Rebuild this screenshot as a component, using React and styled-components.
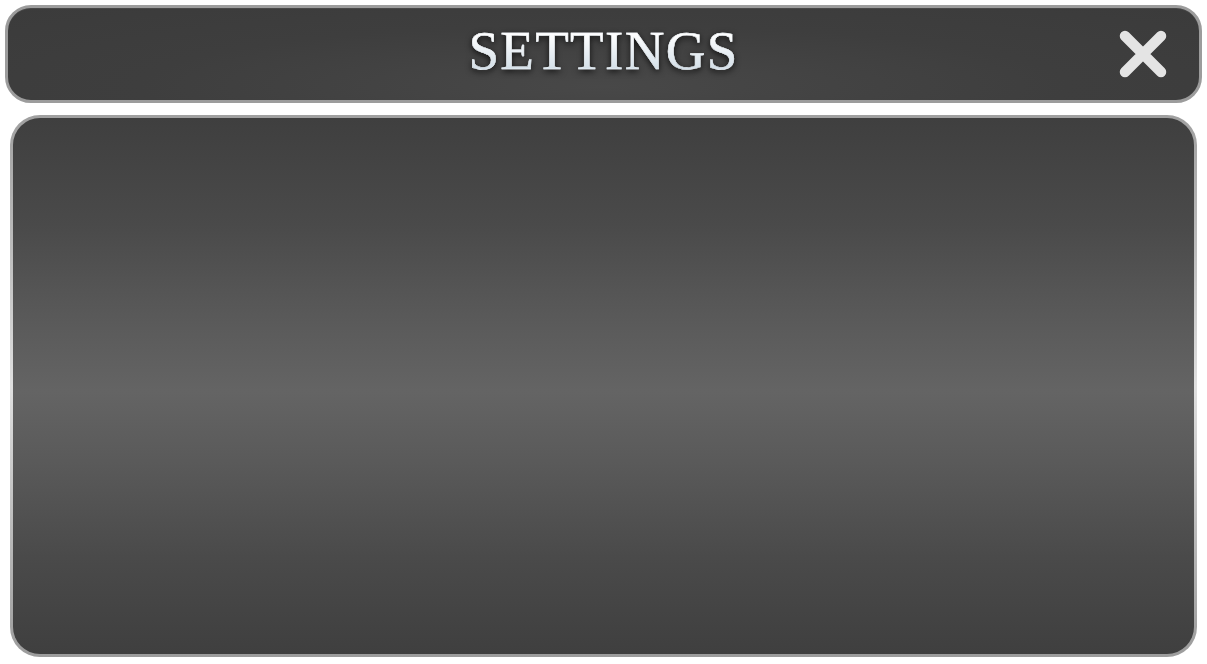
import React from 'react';
import styled, { createGlobalStyle } from 'styled-components';

const GlobalStyle = createGlobalStyle`
  html, body {
    margin: 0;
    padding: 0;
    background: #ffffff;
  }
  #root {
    width: 1207px;
    height: 664px;
  }
`;

const StyledPage = styled.div`
  display: flex;
  flex-direction: column;
  gap: 12px;
  padding: 5px 5px 7px 5px;
  box-sizing: border-box;
  height: 664px;
`;

const StyledHeader = styled.header`
  position: relative;
  display: flex;
  align-items: center;
  justify-content: center;
  height: 98px;
  box-sizing: border-box;
  border: 3px solid #9c9c9c;
  border-radius: 26px;
  background: radial-gradient(ellipse at 50% 85%, #484848 0%, #3e3e3e 55%, #3b3b3b 100%);
  box-shadow: inset 0 1px 0 rgba(255, 255, 255, 0.06);
`;

const StyledTitle = styled.h1`
  margin: 0 0 7px 0;
  font-family: 'Liberation Serif', 'Times New Roman', serif;
  font-weight: normal;
  font-size: 55px;
  letter-spacing: 1.3px;
  line-height: 1;
  background: linear-gradient(180deg, #ffffff 20%, #d3dfe8 85%);
  -webkit-background-clip: text;
  background-clip: text;
  color: transparent;
  -webkit-text-stroke: 0.4px #eef3f7;
  filter: drop-shadow(0 2px 3px rgba(0, 0, 0, 0.75));
`;

const StyledClose = styled.button`
  position: absolute;
  right: 29px;
  top: 50%;
  transform: translateY(-50%);
  width: 54px;
  height: 54px;
  padding: 0;
  border: none;
  background: none;
  cursor: pointer;
  display: flex;
  align-items: center;
  justify-content: center;
`;

const StyledFrame = styled.section`
  flex: 1;
  margin: 0 5px;
  padding: 3px;
  border-radius: 30px;
  background: linear-gradient(180deg, #a0a0a0 0%, #bdbdbd 25%, #e0e0e0 50%, #bdbdbd 75%, #9c9c9c 100%);
  display: flex;
`;

const StyledPanel = styled.div`
  flex: 1;
  border-radius: 27px;
  background: linear-gradient(
    180deg,
    #3f3f3f 0%,
    #4a4a4a 20%,
    #5a5a5a 38%,
    #646464 51%,
    #5a5a5a 64%,
    #4a4a4a 82%,
    #3f3f3f 100%
  );
`;

const CloseIcon = () => (
  <svg width="54" height="54" viewBox="0 0 54 54">
    <path
      d="M9 9 L45 45 M45 9 L9 45"
      stroke="#e4e4e4"
      strokeWidth="10.5"
      strokeLinecap="round"
      fill="none"
    />
  </svg>
);

const App = () => (
  <>
    <GlobalStyle />
    <StyledPage>
      <StyledHeader>
        <StyledTitle>SETTINGS</StyledTitle>
        <StyledClose aria-label="Close">
          <CloseIcon />
        </StyledClose>
      </StyledHeader>
      <StyledFrame>
        <StyledPanel />
      </StyledFrame>
    </StyledPage>
  </>
);

export default App;
